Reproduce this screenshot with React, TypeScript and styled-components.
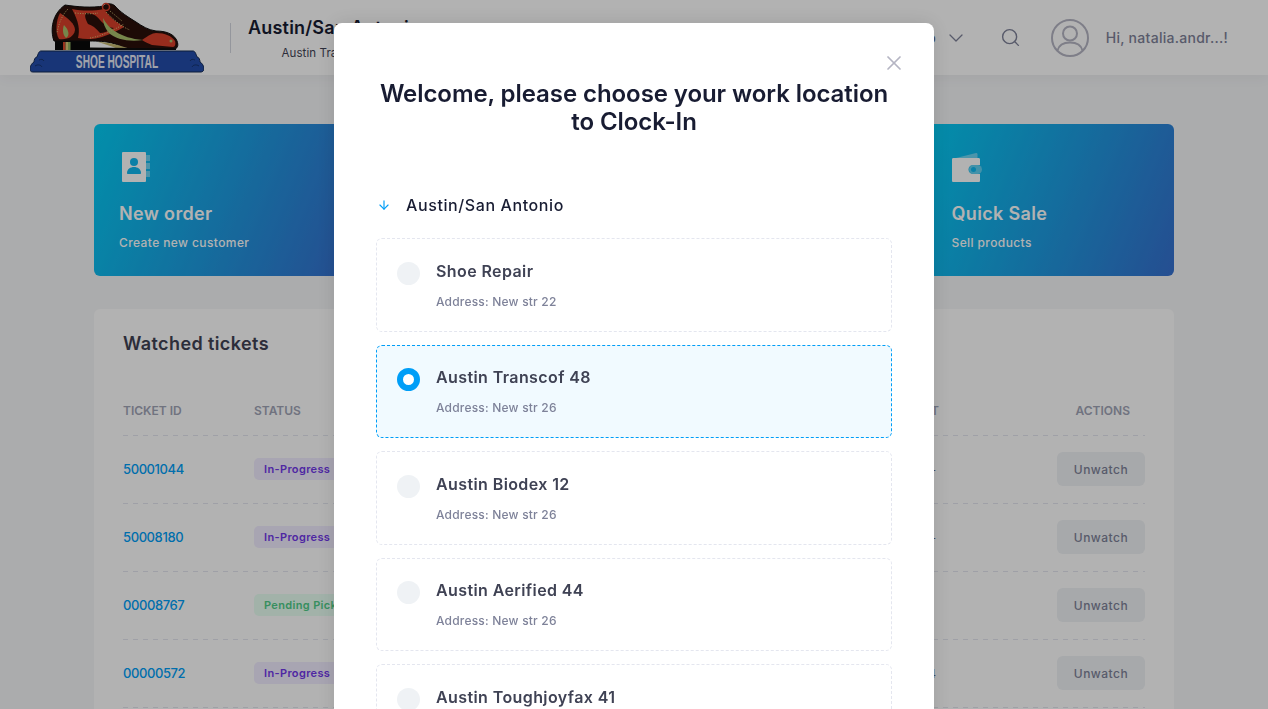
import React from 'react';
import styled, { createGlobalStyle } from 'styled-components';
import { ChevronDown, Search, X, ArrowDown } from 'lucide-react';

const GlobalStyle = createGlobalStyle`
  html, body {
    margin: 0;
    height: 100%;
    overflow: hidden;
    background: #f5f6f8;
    font-family: 'Inter', 'Liberation Sans', sans-serif;
  }
  * {
    box-sizing: border-box;
  }
`;

const Page = styled.div`
  height: 709px;
  overflow: hidden;
`;

const Header = styled.header`
  height: 75px;
  background: #fff;
  padding: 0 40px 0 30px;
  display: flex;
  align-items: center;
  box-shadow: 0 4px 12px rgba(0, 0, 0, 0.04);
`;

const LogoWrap = styled.div`
  width: 174px;
  height: 75px;
  flex: none;
`;

const Divider = styled.div`
  width: 1px;
  height: 30px;
  margin: 0 17px 0 26px;
  background: #d5d7e0;
`;

const BranchBlock = styled.div`
  display: flex;
  flex-direction: column;
  align-items: center;
  gap: 8px;
  padding-top: 2px;
`;

const BranchName = styled.div`
  font-size: 18px;
  font-weight: 600;
  color: #181c32;
  letter-spacing: 0.2px;
`;

const BranchSub = styled.div`
  font-size: 11.5px;
  letter-spacing: 0.1px;
  color: #3f4254;
`;

const HeaderRight = styled.div`
  margin-left: auto;
  display: flex;
  align-items: center;
  color: #7e8299;
`;

const NavLabel = styled.span`
  font-size: 14px;
  font-weight: 500;
  margin-right: 8px;
  color: #5e6278;
`;

const SearchButton = styled.span`
  display: flex;
  margin: 0 30px 0 32px;
`;

const Avatar = styled.span`
  display: flex;
  margin-right: 17px;
  color: #b5b5c3;
`;

const Greeting = styled.span`
  font-size: 14px;
  font-weight: 500;
  letter-spacing: 0.28px;
  color: #7e8299;
`;

const Main = styled.main`
  padding: 49px 94px 0;
`;

const CardRow = styled.div`
  display: grid;
  grid-template-columns: repeat(4, 1fr);
  gap: 30px;
`;

const ActionCard = styled.div`
  height: 152px;
  border-radius: 6px;
  padding: 27px 25px;
  color: #fff;
  background: linear-gradient(112deg, #03cdf5 0%, #3670d0 100%);
`;

const CardIcon = styled.div`
  height: 32px;
  margin-bottom: 19px;
`;

const CardTitle = styled.div`
  font-size: 18px;
  font-weight: 600;
  letter-spacing: 0.35px;
  margin-bottom: 8px;
  line-height: 24px;
`;

const CardText = styled.div`
  font-size: 12px;
  line-height: 18px;
  letter-spacing: 0.4px;
  font-weight: 500;
`;

const TablePanel = styled.section`
  margin-top: 33px;
  background: #fff;
  border-radius: 6px;
  padding: 22px 29px 30px;
`;

const PanelTitle = styled.h2`
  margin: 0 0 30px;
  font-size: 18px;
  line-height: 26px;
  font-weight: 600;
  letter-spacing: 0.4px;
  color: #3f4254;
`;

const TableRow = styled.div`
  display: grid;
  grid-template-columns: 131px 1fr 173px 88px;
  align-items: center;
  height: 68px;
  padding-bottom: 2px;
  background: repeating-linear-gradient(90deg, #e4e6ef 0 5px, transparent 5px 10px) bottom / 100% 1px no-repeat;

  &:first-of-type {
    height: 49px;
    padding-bottom: 3px;
  }
`;

const HeadCell = styled.div<{ $right?: boolean }>`
  font-size: 12px;
  font-weight: 600;
  color: #a1a5b7;
  text-align: ${(p) => (p.$right ? 'right' : 'left')};
  padding-right: ${(p) => (p.$right ? '15px' : '0')};
`;

const TicketLink = styled.a`
  font-size: 13px;
  font-weight: 500;
  letter-spacing: -0.4px;
  color: #009ef7;
`;

const StatusBadge = styled.span<{ $tone: 'info' | 'success' }>`
  justify-self: start;
  padding: 4px 10px;
  border-radius: 5px;
  font-size: 11px;
  font-weight: 600;
  letter-spacing: 0.35px;
  line-height: 14px;
  color: ${(p) => (p.$tone === 'info' ? '#7239ea' : '#50cd89')};
  background: ${(p) => (p.$tone === 'info' ? '#f1ecff' : '#e8fff3')};
`;

const AmountCell = styled.div`
  width: 52px;
  text-align: right;
  font-size: 12px;
  color: #5e6278;
`;

const UnwatchButton = styled.button`
  width: 88px;
  height: 34px;
  border: 0;
  border-radius: 6px;
  background: #eff2f5;
  color: #7e8299;
  letter-spacing: 0.5px;
  font: 500 12px 'Inter', 'Liberation Sans', sans-serif;
`;

const Backdrop = styled.div`
  position: fixed;
  inset: 0;
  background: rgba(0, 0, 0, 0.3);
  overflow: hidden;
`;

const Modal = styled.div`
  position: relative;
  width: 600px;
  margin: 23px auto 0;
  background: #fff;
  border-radius: 8px;
  padding: 57px 42px 0;
  box-shadow: 0 0 20px rgba(0, 0, 0, 0.12);
`;

const CloseButton = styled.span`
  position: absolute;
  top: 28px;
  right: 28px;
  display: flex;
  color: #b5b5c3;
`;

const ModalTitle = styled.h1`
  margin: 0 0 57px;
  text-align: center;
  font-size: 24px;
  line-height: 28px;
  font-weight: 600;
  letter-spacing: -0.07px;
  color: #181c32;
`;

const GroupHead = styled.div`
  display: flex;
  align-items: center;
  gap: 15px;
  height: 24px;
  margin-bottom: 21px;
  font-size: 16px;
  font-weight: 500;
  letter-spacing: 0.6px;
  color: #181c32;
  padding-left: 1px;
`;

const GroupArrow = styled.span`
  display: flex;
  color: #009ef7;
`;

const LocationList = styled.div`
  display: flex;
  flex-direction: column;
  gap: 13px;
`;

const LocationCard = styled.div<{ $active?: boolean }>`
  height: 93.5px;
  padding: 19.5px 20px 0;
  display: flex;
  gap: 16px;
  border-radius: 6px;
  border: 1px dashed ${(p) => (p.$active ? '#009ef7' : '#e4e6ef')};
  background: ${(p) => (p.$active ? '#f1faff' : '#fff')};
`;

const Radio = styled.span<{ $active?: boolean }>`
  flex: none;
  width: 23px;
  height: 23px;
  margin-top: 3px;
  border-radius: 50%;
  background: ${(p) => (p.$active ? '#fff' : '#eff2f5')};
  border: ${(p) => (p.$active ? '6px solid #009ef7' : '0')};
`;

const LocationName = styled.div`
  font-size: 16px;
  line-height: 24px;
  font-weight: 600;
  letter-spacing: 0.4px;
  color: #3f4254;
  margin-bottom: 10px;
`;

const LocationAddress = styled.div`
  font-size: 12px;
  line-height: 18px;
  font-weight: 500;
  letter-spacing: 0.2px;
  color: #7e8299;
`;

const ShoeLogo = () => (
  <svg width="174" height="75" viewBox="0 0 174 75">
    <path d="M25 41h35v9H25z" fill="#0a0a0a" />
    <path d="M33 42h2.500v8H33z" fill="#d8482a" />
    <path d="M35.500 42H38v8h-2.500z" fill="#d9c878" />
    <path d="M38 42h2.500v8H38z" fill="#8fb060" />
    <path
      d="M24 41C20 30 22 14 35 5c13 2 27 3 39 1 2-3 8-3 11 0 5 6 13 11 21 16 6 4 12 8 20 9 10 0 17 3 20 8 3 5 2 9-1 10H100c-5 0-8-3-15-5-9-3-19-3-25-3z"
      fill="#2a0f0a"
      stroke="#0d0d0d"
      strokeWidth="1"
    />
    <path d="M30 13c-4 7-5 20-1 26 8 1 15-2 16-9 0-6-7-12-15-17z" fill="#d8402a" />
    <path d="M34 25c-2 5-1 10 2 13 4-2 3-8-2-13z" fill="#a9c06c" />
    <path
      d="M42 9c10 2 22 2 32 0 4 7 12 13 20 18-6 4-14 7-22 10-6 2-16 3-24 1 2-8 1-16-6-29z"
      fill="#d8402a"
    />
    <path d="M56 13c6 0 10 2 14 7s10 8 14 8c-6 3-10 5-14 5-4-5-8-8-12-9-2-4-4-8-2-11z" fill="#2a0f0a" />
    <path d="M73 18c5 10 17 20 40 22-13 2-27 0-35-8-3-4-5-9-5-14z" fill="#a9c06c" />
    <path d="M112 40c6-4 10-7 14-7 9 0 16 3 19 8 1 3 0 6-2 6l-21-2c-4-2-8-3-10-5z" fill="#d8402a" />
    <circle cx="141" cy="41" r="1.500" fill="#a9c06c" />
    <path d="M68 42c12 0 24 4 32 7H88c-6-3-14-5-20-7z" fill="#c9bb72" />
    <path d="M60 47.500 146 48.500V50H60z" fill="#0d0d0d" />
    <g fill="none" stroke="#d9c878" strokeWidth="1" strokeDasharray="1 1.500">
      <path d="M38 9c-5 5-9 13-11 24" />
      <path d="M45 13c10 1 17 1 23 0" />
      <path d="M76 12c8 8 16 15 24 18" />
      <path d="M60 38c12-2 24-8 34-14" />
      <path d="M80 11l12 10" />
    </g>
    <circle cx="76" cy="7" r="3.500" fill="none" stroke="#d8402a" strokeWidth="1.500" />
    <path
      d="M11 51h152c2 0 3 3 4 6 2 0 3 3 3 5 2 1 4 4 4 7 0 2-2 3-3 3H3c-2 0-3-1-3-3 0-3 2-6 4-7 0-2 1-5 3-5 1-3 2-6 4-6z"
      fill="#234dab"
      stroke="#132a55"
      strokeWidth="1"
    />
    <g fill="none" stroke="#16336f" strokeWidth="1">
      <path d="M5 66c3-2 6-1 7 1M9 60c2-1 4-1 5 1" />
      <path d="M169 66c-3-2-6-1-7 1M165 60c-2-1-4-1-5 1" />
    </g>
    <text
      transform="translate(87 68) scale(0.565 1)"
      textAnchor="middle"
      fontFamily="'Liberation Sans', sans-serif"
      fontWeight="700"
      fontSize="18"
      fill="#e6e8f4"
    >
      SHOE HOSPITAL
    </text>
  </svg>
);

const ContactsIcon = () => (
  <svg width="31" height="32" viewBox="0 0 31 32">
    <path d="M27 4h4v6h-4zM27 12h4v6h-4zM27 20h4v6h-4z" fill="#fff" opacity="0.4" />
    <rect x="3" y="1" width="24" height="30" rx="1" fill="#fff" />
    <circle cx="15" cy="11" r="4" fill="#10b8f0" />
    <path d="M8 22c0-4 3.500-6 7-6s7 2 7 6c0 .6-.4 1-1 1H9c-.6 0-1-.4-1-1z" fill="#10b8f0" />
  </svg>
);

const WalletIcon = () => (
  <svg width="31" height="32" viewBox="0 0 31 32">
    <path d="M4 7 24 2c1 0 1.500 .5 1.500 1.500V7z" fill="#fff" opacity="0.4" />
    <path
      d="M0 8.500C0 7.500 .5 7 1.500 7h25c1 0 1.500 .5 1.500 1.500V14h-7a4.500 4.500 0 0 0 0 9h7v6.500c0 1-.5 1.500-1.500 1.500h-25C.5 31 0 30.500 0 29.500z"
      fill="#fff"
    />
    <rect x="17" y="14" width="13" height="9" rx="4.500" fill="#fff" opacity="0.35" />
    <circle cx="21.500" cy="18.500" r="2.500" fill="#10b8f0" />
  </svg>
);

const UserCircleIcon = () => (
  <svg width="38" height="38" viewBox="0 0 38 38" fill="none" stroke="currentColor" strokeWidth="2">
    <circle cx="19" cy="19" r="18" />
    <circle cx="19" cy="14.500" r="7" />
    <path d="M6.500 31.500C8 25.500 13 23.500 19 23.500s11 2 12.500 8" />
  </svg>
);

const tickets = [
  { id: '50001044', status: 'In-Progress', tone: 'info', amount: '-' },
  { id: '50008180', status: 'In-Progress', tone: 'info', amount: '-' },
  { id: '00008767', status: 'Pending Pickup', tone: 'success', amount: '' },
  { id: '00000572', status: 'In-Progress', tone: 'info', amount: '$24' },
] as const;

const locations = [
  { name: 'Shoe Repair', address: 'Address: New str 22' },
  { name: 'Austin Transcof 48', address: 'Address: New str 26', active: true },
  { name: 'Austin Biodex 12', address: 'Address: New str 26' },
  { name: 'Austin Aerified 44', address: 'Address: New str 26' },
  { name: 'Austin Toughjoyfax 41', address: 'Address: New str 26' },
];

export default function App() {
  return (
    <Page>
      <GlobalStyle />
      <Header>
        <LogoWrap>
          <ShoeLogo />
        </LogoWrap>
        <Divider />
        <BranchBlock>
          <BranchName>Austin/San Antonio</BranchName>
          <BranchSub>Austin Transcof 48</BranchSub>
        </BranchBlock>
        <HeaderRight>
          <NavLabel>Info</NavLabel>
          <ChevronDown size={24} strokeWidth={1.3} />
          <SearchButton>
            <Search size={21} strokeWidth={1.6} />
          </SearchButton>
          <Avatar>
            <UserCircleIcon />
          </Avatar>
          <Greeting>Hi, natalia.andr...!</Greeting>
        </HeaderRight>
      </Header>
      <Main>
        <CardRow>
          <ActionCard>
            <CardIcon>
              <ContactsIcon />
            </CardIcon>
            <CardTitle>New order</CardTitle>
            <CardText>Create new customer</CardText>
          </ActionCard>
          <ActionCard />
          <ActionCard />
          <ActionCard>
            <CardIcon>
              <WalletIcon />
            </CardIcon>
            <CardTitle>Quick Sale</CardTitle>
            <CardText>Sell products</CardText>
          </ActionCard>
        </CardRow>
        <TablePanel>
          <PanelTitle>Watched tickets</PanelTitle>
          <TableRow>
            <HeadCell>TICKET ID</HeadCell>
            <HeadCell>STATUS</HeadCell>
            <HeadCell>AMOUNT</HeadCell>
            <HeadCell $right>ACTIONS</HeadCell>
          </TableRow>
          {tickets.map((ticket) => (
            <TableRow key={ticket.id}>
              <TicketLink>{ticket.id}</TicketLink>
              <StatusBadge $tone={ticket.tone}>{ticket.status}</StatusBadge>
              <AmountCell>{ticket.amount}</AmountCell>
              <UnwatchButton>Unwatch</UnwatchButton>
            </TableRow>
          ))}
        </TablePanel>
      </Main>
      <Backdrop>
        <Modal>
          <CloseButton>
            <X size={24} strokeWidth={1.7} />
          </CloseButton>
          <ModalTitle>
            Welcome, please choose your work location
            <br />
            to Clock-In
          </ModalTitle>
          <GroupHead>
            <GroupArrow>
              <ArrowDown size={14} strokeWidth={2} />
            </GroupArrow>
            Austin/San Antonio
          </GroupHead>
          <LocationList>
            {locations.map((location) => (
              <LocationCard key={location.name} $active={location.active}>
                <Radio $active={location.active} />
                <div>
                  <LocationName>{location.name}</LocationName>
                  <LocationAddress>{location.address}</LocationAddress>
                </div>
              </LocationCard>
            ))}
          </LocationList>
        </Modal>
      </Backdrop>
    </Page>
  );
}
